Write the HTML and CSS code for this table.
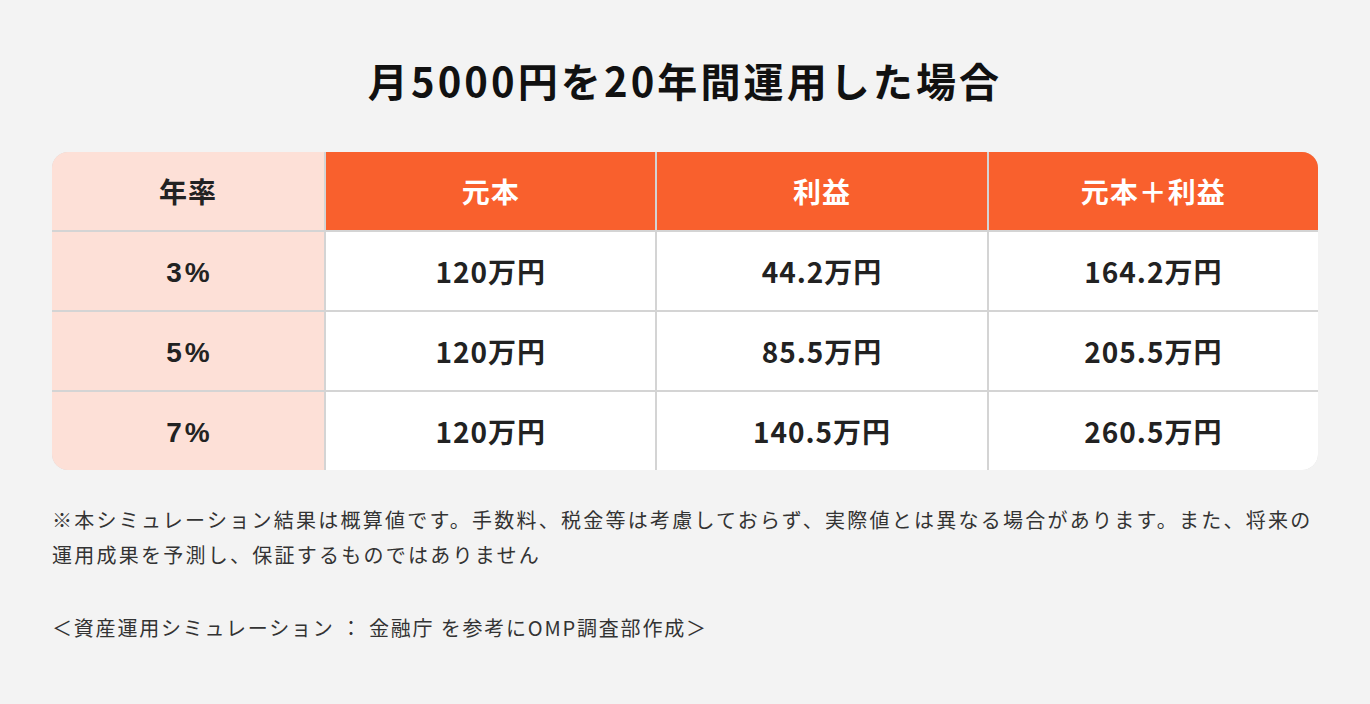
FILE: index.html
```html
<!DOCTYPE html>
<html lang="ja">
<head>
<meta charset="utf-8">
<link rel="stylesheet" href="styles.css">
</head>
<body>
<main class="page">
  <h1 class="title">月5000円を20年間運用した場合</h1>
  <div class="table">
    <div class="cell rate head">年率</div>
    <div class="cell orange">元本</div>
    <div class="cell orange">利益</div>
    <div class="cell orange">元本＋利益</div>

    <div class="cell rate num">3%</div>
    <div class="cell">120万円</div>
    <div class="cell">44.2万円</div>
    <div class="cell">164.2万円</div>

    <div class="cell rate num">5%</div>
    <div class="cell">120万円</div>
    <div class="cell">85.5万円</div>
    <div class="cell">205.5万円</div>

    <div class="cell rate num">7%</div>
    <div class="cell">120万円</div>
    <div class="cell">140.5万円</div>
    <div class="cell">260.5万円</div>
  </div>
  <p class="note">※本シミュレーション結果は概算値です。手数料、税金等は考慮しておらず、実際値とは異なる場合があります。また、将来の運用成果を予測し、保証するものではありません</p>
  <p class="source">＜資産運用シミュレーション ： 金融庁 を参考にOMP調査部作成＞</p>
</main>
</body>
</html>
```

FILE: styles.css
```css
html, body {
  margin: 0;
  padding: 0;
  background: #f3f3f3;
}
body {
  font-family: "Noto Sans CJK JP", "Noto Sans", sans-serif;
  color: #222;
}
.page {
  width: 1266px;
  margin: 0 auto;
  padding-top: 54px;
}
.title {
  margin: 0;
  text-align: center;
  font-size: 40px;
  line-height: 52px;
  font-weight: 700;
  letter-spacing: 3.1px;
  color: #111;
}
.table {
  margin-top: 46px;
  display: grid;
  grid-template-columns: 272px 1fr 1fr 1fr;
  grid-auto-rows: 78px;
  gap: 2px;
  background: #d4d4d4;
  border-radius: 16px;
  overflow: hidden;
}
.cell {
  display: flex;
  align-items: center;
  justify-content: center;
  background: #fff;
  font-size: 28px;
  font-weight: 700;
  letter-spacing: 1px;
  color: #222;
}
.cell.rate {
  background: #fde0d7;
}
.cell.head {
  letter-spacing: 1px;
}
.cell.num {
  font-family: "Liberation Sans", "Noto Sans CJK JP", sans-serif;
  font-size: 28px;
  letter-spacing: 3px;
  padding: 4px 0 0 3px;
}
.cell.orange {
  background: #f9602d;
  color: #fff;
  letter-spacing: 1px;
}
.note {
  margin: 32px 0 0;
  font-size: 20px;
  line-height: 35px;
  letter-spacing: 2.25px;
  color: #333;
}
.source {
  margin: 38px 0 0;
  font-size: 20px;
  line-height: 35px;
  letter-spacing: 1.8px;
  color: #333;
}
```
